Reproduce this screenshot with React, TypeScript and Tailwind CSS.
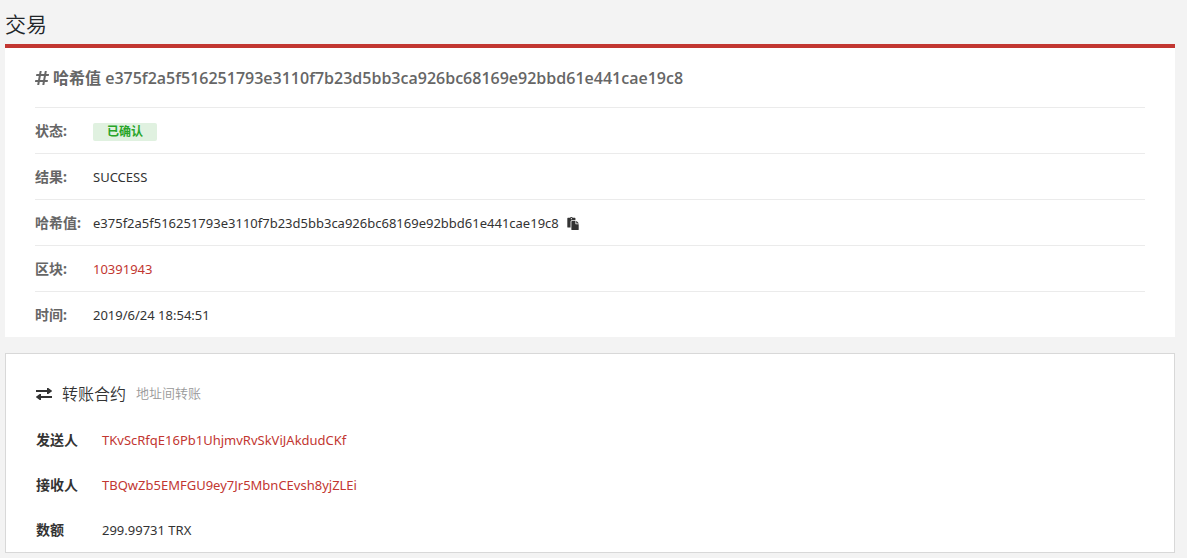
import { FaHashtag, FaPaste } from "react-icons/fa";

const HASH = "e375f2a5f516251793e3110f7b23d5bb3ca926bc68169e92bbd61e441cae19c8";

const TransferIcon = () => (
  <svg viewBox="0 0 16 12" className="w-4 h-3" fill="currentColor" aria-hidden="true">
    <path d="M0 2h11V0h1.300L16 2.700v.6L12.300 6H11V4H0z" />
    <path d="M16 10H5v2H3.700L0 9.300v-.6L3.700 6H5v2h11z" />
  </svg>
);

const App = () => {
  const details = [
    {
      label: "状态",
      value: (
        <span className="block w-16 h-[18px] rounded-xs bg-[#e0f1e0] text-center text-xs leading-[18px] font-bold text-[#28a428]">
          已确认
        </span>
      ),
    },
    { label: "结果", value: "SUCCESS" },
    {
      label: "哈希值",
      value: (
        <span className="flex items-center gap-2">
          {HASH}
          <button type="button" aria-label="复制" className="cursor-pointer">
            <FaPaste className="w-3 h-[13px]" />
          </button>
        </span>
      ),
    },
    {
      label: "区块",
      value: (
        <a href="#block" className="text-[#c23631]">
          10391943
        </a>
      ),
    },
    { label: "时间", value: "2019/6/24 18:54:51" },
  ];

  const transfer = [
    { label: "发送人", value: "TKvScRfqE16Pb1UhjmvRvSkViJAkdudCKf", link: true },
    { label: "接收人", value: "TBQwZb5EMFGU9ey7Jr5MbnCEvsh8yjZLEi", link: true },
    { label: "数额", value: "299.99731 TRX", link: false },
  ];

  return (
    <main className="min-h-screen bg-[#f3f3f3] pl-[5px] pr-3 pb-[5px] font-['Noto_Sans','Noto_Sans_CJK_SC',sans-serif] text-[13px] text-[#333]">
      <h1 className="pt-2 pb-1 text-[21px] leading-8 font-[350] text-[#212529]">交易</h1>

      {/* transaction */}
      <section className="border-t-4 border-[#c23631] bg-white px-[30px]">
        <h2 className="flex items-center gap-1 h-[59px] font-['Open_Sans','Noto_Sans_CJK_SC',sans-serif] text-base font-semibold text-[#666]">
          <FaHashtag className="w-[14px] h-4" />
          <span>哈希值 {HASH}</span>
        </h2>
        <table className="w-full border-separate border-spacing-0">
          <tbody>
            {details.map(({ label, value }) => (
              <tr key={label} className="h-[46px]">
                <th
                  scope="row"
                  className="w-[58px] border-t border-[#ebebeb] text-left text-sm font-bold whitespace-nowrap text-[#666]"
                >
                  {label}:
                </th>
                <td className="border-t border-[#ebebeb] pt-0.5">{value}</td>
              </tr>
            ))}
          </tbody>
        </table>
      </section>

      {/* contract */}
      <section className="mt-4 border border-[#d8d8d8] bg-white px-[30px] pt-7">
        <h2 className="flex items-center h-6 mb-[11px] text-base font-[350]">
          <TransferIcon />
          <span className="ml-[10px]">转账合约</span>
          <small className="ml-[10px] text-[13px] text-[#999]">地址间转账</small>
        </h2>
        <table className="w-full">
          <tbody>
            {transfer.map(({ label, value, link }) => (
              <tr key={label} className="h-[45px]">
                <th scope="row" className="w-[66px] text-left text-sm font-bold whitespace-nowrap">
                  {label}
                </th>
                <td className="pt-0.5">
                  {link ? (
                    <a href={`#${value}`} className="text-[#c23631]">
                      {value}
                    </a>
                  ) : (
                    value
                  )}
                </td>
              </tr>
            ))}
          </tbody>
        </table>
      </section>
    </main>
  );
};

export default App;
